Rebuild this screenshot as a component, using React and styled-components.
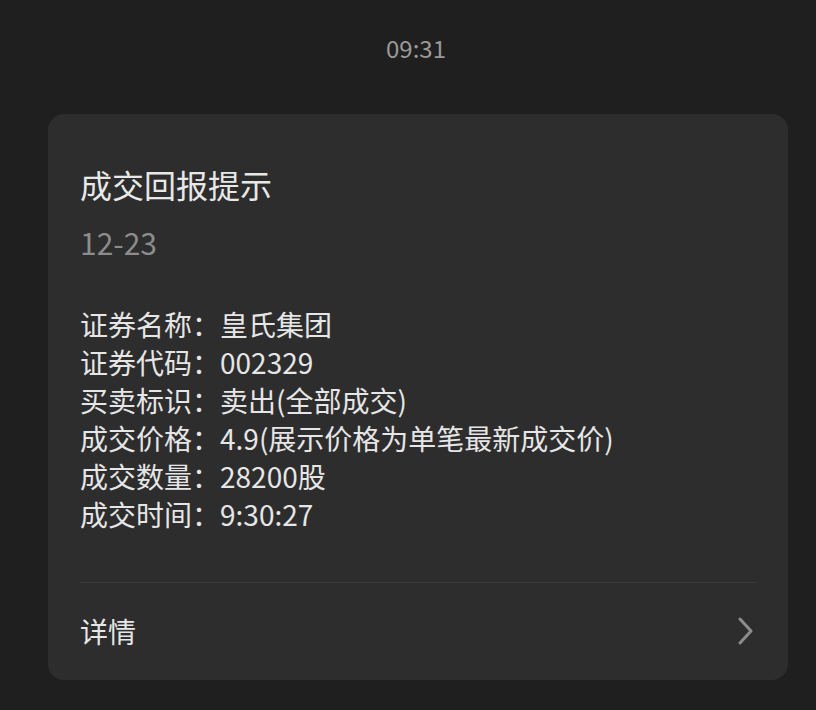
import React from 'react'
import styled, { createGlobalStyle } from 'styled-components'

const GlobalStyle = createGlobalStyle`
  html, body {
    margin: 0;
    padding: 0;
    background: #1f1f1f;
  }
  body {
    font-family: "Noto Sans CJK SC", "Noto Sans", sans-serif;
  }
`

const Page = styled.div`
  width: 816px;
  height: 710px;
  background: #1f1f1f;
  overflow: hidden;
`

const TimeStamp = styled.div`
  padding: 32px 0 0 16px;
  height: 114px;
  box-sizing: border-box;
  text-align: center;
  font-size: 24px;
  line-height: 32px;
  color: #9a9a9a;
`

const Card = styled.div`
  margin-left: 48px;
  width: 740px;
  height: 566px;
  box-sizing: border-box;
  background: #2d2d2d;
  border-radius: 16px;
  padding: 0 32px;
  display: flex;
  flex-direction: column;
`

const Title = styled.div`
  margin-top: 48px;
  font-size: 32px;
  line-height: 44px;
  color: #e8e8e8;
`

const DateText = styled.div`
  margin-top: 16px;
  font-size: 30px;
  line-height: 40px;
  color: #8c8c8c;
`

const Fields = styled.div`
  margin-top: 43px;
  display: flex;
  flex-direction: column;
`

const Field = styled.div`
  font-size: 28px;
  line-height: 38px;
  color: #e6e6e6;
  white-space: nowrap;
`

const Divider = styled.div`
  margin-top: 49px;
  height: 1px;
  background: #3a3a3a;
`

const DetailRow = styled.div`
  flex: 1;
  display: flex;
  align-items: center;
  justify-content: space-between;
  padding-bottom: 2px;
`

const DetailLabel = styled.span`
  font-size: 28px;
  color: #e6e6e6;
`

const Chevron = () => (
  <svg width="20" height="28" viewBox="0 0 20 28">
    <path d="M4 2 L15 14 L4 26" fill="none" stroke="#8c8c8c" strokeWidth="3" strokeLinecap="round" strokeLinejoin="round" />
  </svg>
)

const fields = [
  ['证券名称', '皇氏集团'],
  ['证券代码', '002329'],
  ['买卖标识', '卖出(全部成交)'],
  ['成交价格', '4.9(展示价格为单笔最新成交价)'],
  ['成交数量', '28200股'],
  ['成交时间', '9:30:27'],
]

export default function App() {
  return (
    <Page>
      <GlobalStyle />
      <TimeStamp>09:31</TimeStamp>
      <Card>
        <Title>成交回报提示</Title>
        <DateText>12-23</DateText>
        <Fields>
          {fields.map(([k, v]) => (
            <Field key={k}>{k}：{v}</Field>
          ))}
        </Fields>
        <Divider />
        <DetailRow>
          <DetailLabel>详情</DetailLabel>
          <Chevron />
        </DetailRow>
      </Card>
    </Page>
  )
}
